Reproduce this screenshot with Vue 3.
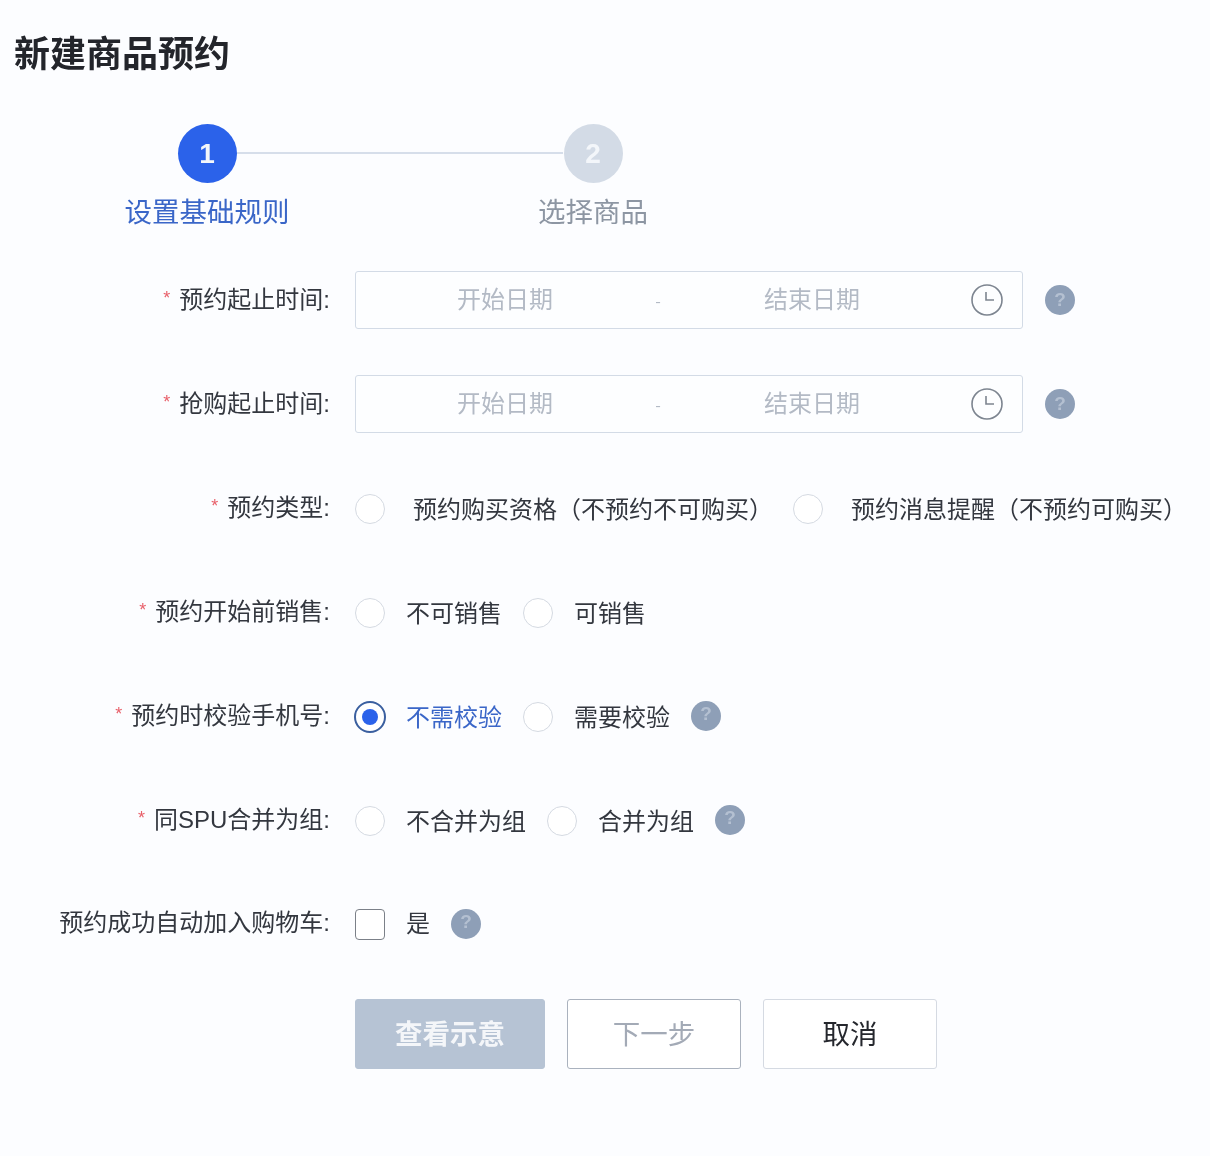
<script setup>
const dateRows = ['预约起止时间:', '抢购起止时间:']
</script>

<template>
  <div class="page">
    <h1 class="title">新建商品预约</h1>

    <div class="steps">
      <div class="circle active">1</div>
      <div class="line"></div>
      <div class="circle">2</div>
      <div class="step-label active-label">设置基础规则</div>
      <div class="step-label last-label">选择商品</div>
    </div>

    <form class="form" @submit.prevent>
      <div v-for="label in dateRows" :key="label" class="row">
        <label class="label"><span class="star">*</span>{{ label }}</label>
        <div class="date-box">
          <span class="date-field">开始日期</span>
          <span class="dash">-</span>
          <span class="date-field end">结束日期</span>
          <svg class="clock" width="32" height="32" viewBox="0 0 32 32" fill="none" stroke="#7d8590" stroke-width="1.6">
            <circle cx="16" cy="16" r="15" />
            <path d="M15 8v8h8" />
          </svg>
        </div>
        <span class="help">?</span>
      </div>

      <div class="row">
        <label class="label"><span class="star">*</span>预约类型:</label>
        <span class="radio"></span>
        <span class="opt wide">预约购买资格（不预约不可购买）</span>
        <span class="radio second"></span>
        <span class="opt wide">预约消息提醒（不预约可购买）</span>
      </div>

      <div class="row">
        <label class="label"><span class="star">*</span>预约开始前销售:</label>
        <div class="choices">
          <span class="radio"></span><span class="opt">不可销售</span>
          <span class="radio"></span><span class="opt">可销售</span>
        </div>
      </div>

      <div class="row">
        <label class="label"><span class="star">*</span>预约时校验手机号:</label>
        <div class="choices">
          <span class="radio checked"></span><span class="opt blue">不需校验</span>
          <span class="radio"></span><span class="opt">需要校验</span>
          <span class="help flat">?</span>
        </div>
      </div>

      <div class="row">
        <label class="label"><span class="star">*</span>同SPU合并为组:</label>
        <div class="choices">
          <span class="radio"></span><span class="opt">不合并为组</span>
          <span class="radio"></span><span class="opt">合并为组</span>
          <span class="help flat">?</span>
        </div>
      </div>

      <div class="row">
        <label class="label">预约成功自动加入购物车:</label>
        <div class="choices">
          <span class="checkbox"></span><span class="opt yes">是</span>
          <span class="help flat">?</span>
        </div>
      </div>

      <div class="actions">
        <button type="button" class="btn primary">查看示意</button>
        <button type="button" class="btn next">下一步</button>
        <button type="button" class="btn cancel">取消</button>
      </div>
    </form>
  </div>
</template>

<style>
html, body { margin: 0; background: #fcfdff; }
</style>

<style scoped>
.page {
  width: 1210px;
  height: 1156px;
  box-sizing: border-box;
  padding-top: 27px;
  background: #fcfdff;
  color: #2b2f38;
  font-family: "Noto Sans CJK SC", "Noto Sans", sans-serif;
  font-size: 24px;
  overflow: hidden;
  filter: blur(0.4px);
}
.title {
  margin: 0 0 0 14px;
  font-size: 36px;
  line-height: 48px;
  font-weight: 700;
  color: #23252b;
}
.steps {
  margin: 49px 0 0 122px;
  display: grid;
  grid-template-columns: 170px 216px 170px;
  grid-template-rows: 59px 40px;
  row-gap: 9px;
  justify-items: center;
  align-items: center;
  width: 556px;
}
.circle {
  width: 59px;
  height: 59px;
  border-radius: 50%;
  background: #d3dbe6;
  color: #f3f6fa;
  font-size: 28px;
  font-weight: 700;
  font-family: "Liberation Sans", sans-serif;
  display: flex;
  align-items: center;
  justify-content: center;
}
.circle.active { background: #2b62ea; }
.line {
  justify-self: stretch;
  margin: 0 -55px 1px;
  height: 2px;
  background: #d6deea;
}
.step-label {
  font-size: 27.5px;
  line-height: 36px;
  padding-bottom: 4px;
  white-space: nowrap;
  color: #8d96a3;
}
.active-label { color: #3a66c8; grid-column: 1; }
.last-label { grid-column: 3; }
.form {
  margin-top: 39px;
  display: flex;
  flex-direction: column;
  gap: 46px;
}
.row {
  height: 58px;
  display: flex;
  align-items: center;
  white-space: nowrap;
}
.label {
  width: 330px;
  margin-right: 25px;
  padding-bottom: 2px;
  flex: none;
  text-align: right;
  color: #33373f;
  font-family: "Liberation Sans", "Noto Sans CJK SC", sans-serif;
  line-height: 36px;
}
.star {
  color: #e8606a;
  font-size: 18px;
  margin-right: 9px;
  vertical-align: 4px;
}
.date-box {
  width: 668px;
  height: 58px;
  box-sizing: border-box;
  border: 1px solid #d3dbe6;
  border-radius: 3px;
  display: flex;
  align-items: center;
  color: #b3bac5;
  background: #fdfeff;
  padding-right: 19px;
}
.date-field { width: 298px; text-align: center; padding-bottom: 6px; }
.date-field.end { width: 300px; }
.dash { width: 8px; text-align: center; font-size: 16px; }
.clock { margin-left: auto; flex: none; }
.help {
  width: 30px;
  height: 30px;
  border-radius: 50%;
  background: #8e9fb7;
  color: #b4c0d1;
  font-size: 19px;
  font-weight: 700;
  font-family: "Liberation Sans", sans-serif;
  display: flex;
  align-items: center;
  justify-content: center;
  flex: none;
  margin-left: 22px;
}
.help.flat { margin-left: 0; padding-bottom: 4px; box-sizing: border-box; }
.radio {
  width: 30px;
  height: 30px;
  margin-top: 2px;
  box-sizing: border-box;
  border: 1px solid #d5dae2;
  border-radius: 50%;
  background: #fff;
  flex: none;
}
.radio.checked {
  width: 32px;
  height: 32px;
  margin: 2px -1px 0;
  border: 2px solid #3a5f9f;
  display: flex;
  align-items: center;
  justify-content: center;
}
.radio.checked::after {
  content: "";
  width: 16px;
  height: 16px;
  border-radius: 50%;
  background: #2b62ea;
}
.radio.second { margin-left: 20px; }
.opt { padding-bottom: 2px; }
.opt.yes { padding-bottom: 6px; }
.opt.wide { margin-left: 28px; color: #33373f; }
.choices {
  display: flex;
  align-items: center;
  gap: 21px;
  color: #33373f;
}
.blue { color: #3a66c8; }
.checkbox {
  width: 30px;
  height: 31px;
  box-sizing: border-box;
  border: 1.5px solid #7b8088;
  border-radius: 4px;
  background: #fff;
  flex: none;
}
.actions {
  display: flex;
  margin-left: 355px;
  gap: 22px;
}
.btn {
  width: 174px;
  height: 70px;
  box-sizing: border-box;
  border-radius: 3px;
  font-family: inherit;
  font-size: 27.5px;
  padding: 0 0 4px;
  background: #fff;
  border: 1px solid #d5dae2;
}
.primary {
  width: 190px;
  background: #b6c3d4;
  border-color: #b6c3d4;
  color: #f4f6f9;
  font-weight: 700;
}
.next { border-color: #aab2be; color: #a3aab6; }
.cancel { color: #25272d; }
</style>
